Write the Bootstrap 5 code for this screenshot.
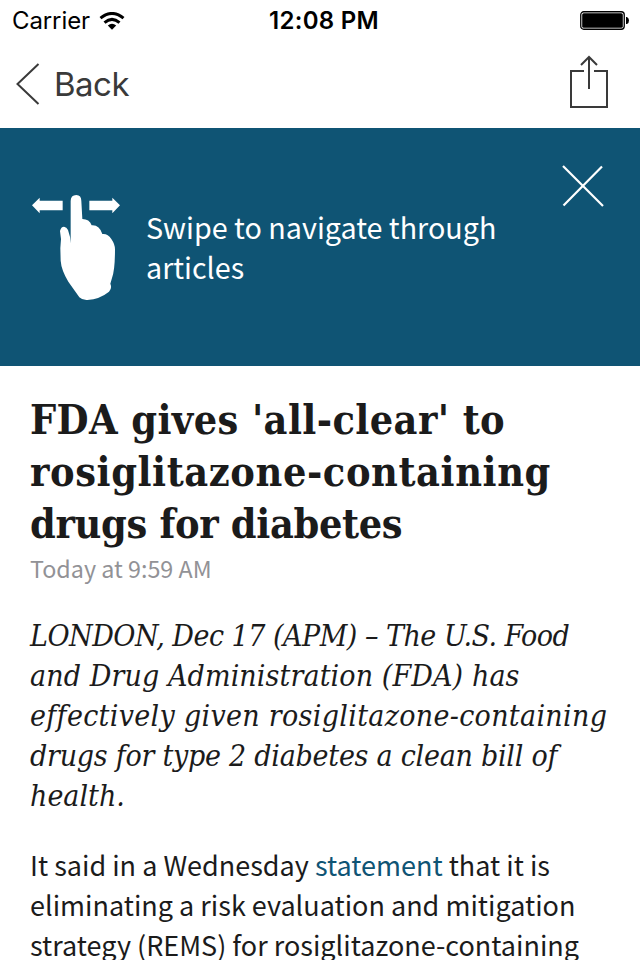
<!DOCTYPE html>
<html lang="en">
<head>
<meta charset="utf-8">
<meta name="viewport" content="width=device-width, initial-scale=1">
<title>FDA gives 'all-clear' to rosiglitazone-containing drugs for diabetes</title>
<link href="https://cdn.jsdelivr.net/npm/bootstrap@5.3.0/dist/css/bootstrap.min.css" rel="stylesheet">
<style>
body{font-family:"Noto Sans CJK SC","Open Sans",sans-serif;color:#1b1b1b;overflow:hidden;height:960px}
svg{display:block;flex:none}
.ui{font-family:Inter,sans-serif}
.line{display:block;width:max-content;white-space:nowrap}
.status-bar{display:grid;grid-template-columns:1fr auto 1fr;height:40px;font-size:24px;line-height:40px;color:#000;padding:0 11px 0 12px}
.status-bar .line{padding-top:1px;letter-spacing:-.1px}
.status-bar .clock{font-weight:600;letter-spacing:.3px;padding-left:7px}
.tool-bar{height:88px;padding:0 31px 0 16px;color:#3a3a3a}
.back-link{color:#3a3a3a;gap:13px}
.back-label{font-size:33px;line-height:40px;letter-spacing:-.5px}
.share-icon{margin-bottom:5px}
.tip{height:238px;background:#0f5474;padding:0 36px 0 32px}
.tip-text{font-size:28.7px;line-height:40px;margin-left:26px;padding-bottom:1px}
.tip-close{margin-top:37px}
.story{padding:28px 30px 0}
.headline{font:bold 41px/52px "DejaVu Serif Condensed","DejaVu Serif",serif}
.headline .line{letter-spacing:.4px}
.headline .line:nth-child(2){letter-spacing:.58px}
.headline .line:last-child{letter-spacing:-.34px}
.stamp{font-size:23.3px;line-height:34px;color:#929296;margin-bottom:31px;padding-top:1px}
.intro{font:italic 30px/40px "DejaVu Serif Condensed","DejaVu Serif",serif;margin-bottom:29px}
.intro .line:nth-child(1){letter-spacing:-.5px}
.intro .line:nth-child(2){letter-spacing:.1px}
.intro .line:nth-child(3){letter-spacing:.31px}
.intro .line:nth-child(4){letter-spacing:-.25px}
.copy{font-size:27px;line-height:40px}
.copy a{color:#0f5474}
</style>
</head>
<body class="bg-white">
<header class="ui">
  <div class="status-bar">
    <div class="d-flex align-items-center gap-2"><span class="line">Carrier</span>
      <svg width="28" height="18" viewBox="-1.5 0 28 18" fill="none" stroke="#000" stroke-width="3"><path d="M1 6.2Q12.5-3.3 24 6.2M5 10.6Q12.5 4.2 20 10.6"/><path d="M8.3 13.5Q12.5 10 16.7 13.5L12.5 17.8Z" fill="#000" stroke="none"/></svg>
    </div>
    <span class="line clock">12:08 PM</span>
    <div class="d-flex align-items-center justify-content-end">
      <svg width="49" height="19" viewBox="0 0 49 19"><rect x=".75" y=".75" width="43.5" height="17.5" rx="3" fill="none" stroke="#000" stroke-width="1.3"/><rect x="2.2" y="2.2" width="40.6" height="14.6" rx="1.5"/><path d="M46 6h1q2 1 2 3.5T47 13h-1z"/></svg>
    </div>
  </div>
  <nav class="tool-bar d-flex align-items-center justify-content-between">
    <a class="back-link d-flex align-items-center text-decoration-none" href="#">
      <svg width="25" height="42" viewBox="0 0 25 42" fill="none" stroke="#3a3a3a" stroke-width="2"><path d="M22.5 1 1.5 21 22.5 41"/></svg>
      <span class="line back-label">Back</span>
    </a>
    <svg class="share-icon" width="40" height="54" viewBox="0 0 40 54" fill="none" stroke="#3a3a3a" stroke-width="2"><path d="M15 16H2V52H38V16H25M20 34V2M12 10 20 2 28 10"/></svg>
  </nav>
</header>
<section class="tip text-white d-flex align-items-center">
  <svg width="88" height="107" viewBox="36 42 264 321" fill="#fff"><path d="M36 76 59 53V62H128V91H59V100ZM300 76 277 53V62H208V91H277V100Z"/><path d="M152 190V63Q152 45 169 45 184 45 184 63L187 117Q208 117 215 136 238 134 247 162 263 160 274 177 285 193 285 208 285 270 276 294L271 311Q277 325 267 335 240 357 202 360 187 361 178 352L145 305Q124 270 122 242L121 205 123 177 120 153Q123 140 132 140 140 141 144 150 152 171 152 190Z"/></svg>
  <div class="tip-text"><span class="line">Swipe to navigate through</span><span class="line">articles</span></div>
  <svg class="tip-close ms-auto align-self-start" width="42" height="42" viewBox="0 0 42 42" fill="none" stroke="#fff" stroke-width="2.2"><path d="M1 1 41 41M40 1.5 1.5 40.5"/></svg>
</section>
<main class="story">
  <h1 class="headline mb-0"><span class="line">FDA gives 'all-clear' to</span><span class="line">rosiglitazone-containing</span><span class="line">drugs for diabetes</span></h1>
  <div class="stamp"><span class="line">Today at 9:59 AM</span></div>
  <p class="intro"><span class="line">LONDON, Dec 17 (APM) – The U.S. Food</span><span class="line">and Drug Administration (FDA) has</span><span class="line">effectively given rosiglitazone-containing</span><span class="line">drugs for type 2 diabetes a clean bill of</span><span class="line">health.</span></p>
  <p class="copy mb-0"><span class="line">It said in a Wednesday <a href="#" class="text-decoration-none">statement</a> that it is</span><span class="line">eliminating a risk evaluation and mitigation</span><span class="line">strategy (REMS) for rosiglitazone-containing</span></p>
</main>
</body>
</html>
